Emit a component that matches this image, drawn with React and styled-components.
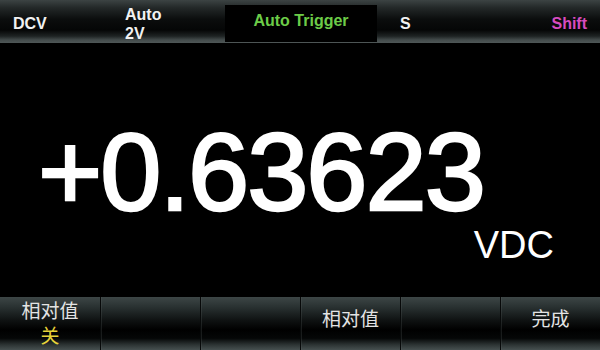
import React from 'react'
import styled, { createGlobalStyle } from 'styled-components'

const GlobalStyle = createGlobalStyle`
  html, body {
    margin: 0;
    padding: 0;
    background: #000;
  }
`

const Screen = styled.div`
  width: 600px;
  height: 350px;
  display: flex;
  flex-direction: column;
  background: #000;
  overflow: hidden;
  font-family: "Liberation Sans", Arial, sans-serif;
`

const StatusBar = styled.div`
  height: 43px;
  box-sizing: border-box;
  padding: 4px 13px 0 13px;
  display: grid;
  grid-template-columns: 112px 100px 152px 1fr auto;
  align-items: center;
  background: linear-gradient(
    to bottom,
    #3c4343 0%,
    #232828 18%,
    #0b0d0d 45%,
    #050606 70%,
    #1e2323 84%,
    #444c4c 93%,
    #4f5757 100%
  );
`

const StatusText = styled.div`
  color: ${(p) => p.color || '#f2f2f2'};
  font-size: 16px;
  font-weight: 700;
  line-height: 19px;
  padding-left: ${(p) => p.indent || 0}px;
`

const TriggerBox = styled.div`
  height: 37px;
  box-sizing: border-box;
  padding-bottom: 6px;
  background: #000;
  display: flex;
  align-items: center;
  justify-content: center;
  color: #6ccc48;
  font-size: 16px;
  font-weight: 700;
`

const Display = styled.div`
  flex: 1;
  display: flex;
  flex-direction: column;
  padding-top: 74px;
  color: #fff;
`

const Reading = styled.div`
  font-size: 110px;
  font-weight: 400;
  -webkit-text-stroke: 2.5px #fff;
  line-height: 110px;
  letter-spacing: -2px;
  padding-left: 38px;
  white-space: nowrap;
`

const Unit = styled.div`
  font-size: 38px;
  line-height: 38px;
  text-align: right;
  padding-right: 46px;
  margin-top: -1px;
`

const SoftKeys = styled.div`
  height: 53px;
  display: grid;
  grid-template-columns: repeat(6, 1fr);
  background: linear-gradient(
    to bottom,
    #3d4646 0%,
    #283030 20%,
    #0e1111 45%,
    #000 62%,
    #050707 78%,
    #2c3333 90%,
    #465050 100%
  );
`

const SoftKey = styled.div`
  box-sizing: border-box;
  display: flex;
  flex-direction: column;
  align-items: center;
  justify-content: center;
  padding-bottom: ${(p) => (p.single ? 8 : 0)}px;
  border-left: ${(p) => (p.first ? 'none' : '1px solid #070909')};
  box-shadow: ${(p) => (p.first ? 'none' : 'inset 1px 0 0 rgba(90,100,100,0.25)')};
  font-family: "Liberation Sans", "Noto Sans CJK SC", sans-serif;
  font-size: 19px;
  line-height: 25px;
  color: #e4e4e4;
`

const StateLabel = styled.span`
  color: #e6d23a;
`

const App = () => {
  return (
    <>
      <GlobalStyle />
      <Screen>
        <StatusBar>
          <StatusText>DCV</StatusText>
          <StatusText>
            Auto
            <br />
            2V
          </StatusText>
          <TriggerBox>Auto Trigger</TriggerBox>
          <StatusText indent={23}>S</StatusText>
          <StatusText color="#d64bbf">Shift</StatusText>
        </StatusBar>

        <Display>
          <Reading>+0.63623</Reading>
          <Unit>VDC</Unit>
        </Display>

        <SoftKeys>
          <SoftKey first>
            <span>相对值</span>
            <StateLabel>关</StateLabel>
          </SoftKey>
          <SoftKey single />
          <SoftKey single />
          <SoftKey single>相对值</SoftKey>
          <SoftKey single />
          <SoftKey single>完成</SoftKey>
        </SoftKeys>
      </Screen>
    </>
  )
}

export default App
